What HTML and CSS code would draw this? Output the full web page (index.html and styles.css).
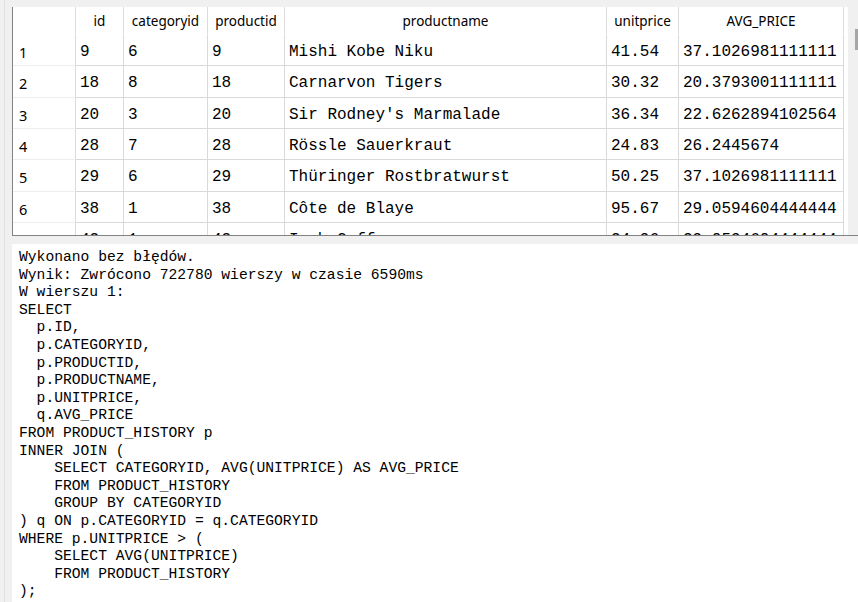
FILE: index.html
```html
<!DOCTYPE html>
<html lang="pl">
<head>
<meta charset="utf-8">
<title>Wynik zapytania</title>
<link rel="stylesheet" href="styles.css">
</head>
<body>
<div class="app">
  <div class="gutter"></div>
  <div class="main">
    <div class="results">
      <div class="grid">
        <div class="hc"></div><div class="hc">id</div><div class="hc">categoryid</div><div class="hc">productid</div><div class="hc">productname</div><div class="hc">unitprice</div><div class="hc">AVG_PRICE</div>

        <div class="rh">1</div><div class="c">9</div><div class="c">6</div><div class="c">9</div><div class="c">Mishi Kobe Niku</div><div class="c">41.54</div><div class="c">37.1026981111111</div>
        <div class="rh">2</div><div class="c">18</div><div class="c">8</div><div class="c">18</div><div class="c">Carnarvon Tigers</div><div class="c">30.32</div><div class="c">20.3793001111111</div>
        <div class="rh">3</div><div class="c">20</div><div class="c">3</div><div class="c">20</div><div class="c">Sir Rodney's Marmalade</div><div class="c">36.34</div><div class="c">22.6262894102564</div>
        <div class="rh">4</div><div class="c">28</div><div class="c">7</div><div class="c">28</div><div class="c">Rössle Sauerkraut</div><div class="c">24.83</div><div class="c">26.2445674</div>
        <div class="rh">5</div><div class="c">29</div><div class="c">6</div><div class="c">29</div><div class="c">Thüringer Rostbratwurst</div><div class="c">50.25</div><div class="c">37.1026981111111</div>
        <div class="rh">6</div><div class="c">38</div><div class="c">1</div><div class="c">38</div><div class="c">Côte de Blaye</div><div class="c">95.67</div><div class="c">29.0594604444444</div>
        <div class="rh">7</div><div class="c">43</div><div class="c">1</div><div class="c">43</div><div class="c">Ipoh Coffee</div><div class="c">24.96</div><div class="c">29.0594604444444</div>
      </div>
      <div class="filler"></div>
      <div class="vscroll"><div class="thumb"></div></div>
    </div>
    <pre class="output">Wykonano bez błędów.
Wynik: Zwrócono 722780 wierszy w czasie 6590ms
W wierszu 1:
SELECT
  p.ID,
  p.CATEGORYID,
  p.PRODUCTID,
  p.PRODUCTNAME,
  p.UNITPRICE,
  q.AVG_PRICE
FROM PRODUCT_HISTORY p
INNER JOIN (
    SELECT CATEGORYID, AVG(UNITPRICE) AS AVG_PRICE
    FROM PRODUCT_HISTORY
    GROUP BY CATEGORYID
) q ON p.CATEGORYID = q.CATEGORYID
WHERE p.UNITPRICE &gt; (
    SELECT AVG(UNITPRICE)
    FROM PRODUCT_HISTORY
);</pre>
  </div>
</div>
</body>
</html>
```

FILE: styles.css
```css
html, body {
  margin: 0;
  padding: 0;
  height: 100%;
  overflow: hidden;
  background: #f0f0f0;
}

.app {
  display: flex;
  height: 602px;
}

.gutter {
  width: 8px;
  margin-left: 4px;
  box-sizing: border-box;
  border-left: 1px solid #e0e0e0;
  flex: none;
}

.main {
  flex: 1;
  min-width: 0;
  display: flex;
  flex-direction: column;
  padding-top: 7px;
}

.results {
  display: flex;
  height: 228px;
  flex: none;
  background: #fff;
  border-left: 1px solid #828282;
  border-bottom: 1px solid #828282;
  overflow: hidden;
}

.grid {
  display: grid;
  grid-template-columns: 63px 48px 84px 77px 322px 72px 165px;
  grid-template-rows: 28px;
  grid-auto-rows: 31.33px;
  width: 831px;
  flex: none;
  align-content: start;
}

.hc {
  font-family: "Noto Sans", sans-serif;
  font-size: 13.5px;
  line-height: 26px;
  padding-top: 1px;
  text-align: center;
  color: #000;
  white-space: nowrap;
  box-sizing: border-box;
  border-right: 1px solid #dcdcdc;
  border-bottom: 1px solid #fff;
}

.rh {
  font-family: "Noto Sans", sans-serif;
  font-size: 14.5px;
  line-height: 29px;
  padding: 3px 0 0 6px;
  color: #000;
  box-sizing: border-box;
  border-right: 1px solid #d9d9d9;
  border-bottom: 1px solid #eeeeee;
}

.c {
  font-family: "Liberation Mono", monospace;
  font-size: 16px;
  line-height: 29px;
  padding: 3px 0 0 4px;
  color: #000;
  white-space: nowrap;
  overflow: hidden;
  box-sizing: border-box;
  border-right: 1px solid #d9d9d9;
  border-bottom: 1px solid #d9d9d9;
}

.filler {
  width: 4px;
  flex: none;
}

.vscroll {
  flex: 1;
  background: #f0f0f0;
}

.thumb {
  margin: 22px 0 0 7px;
  width: 8px;
  height: 21px;
  background: #a6a6a6;
}

.output {
  flex: 1;
  margin: 8px 0 0 0;
  padding: 5px 7px 0 7px;
  background: #fff;
  font-family: "Liberation Mono", monospace;
  font-size: 14.67px;
  line-height: 17.6px;
  color: #000;
  white-space: pre;
  overflow: hidden;
}
```
